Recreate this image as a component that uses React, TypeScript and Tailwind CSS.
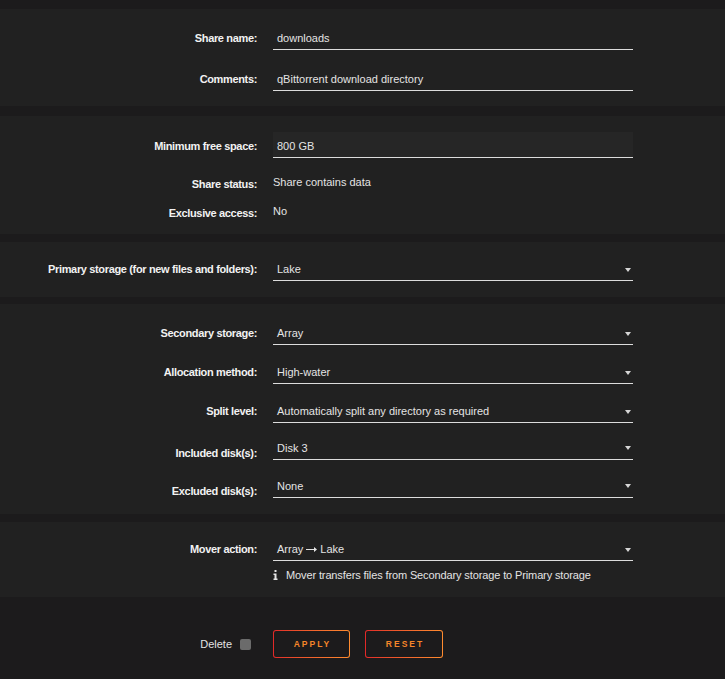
import React from "react";

const font = { fontFamily: '"Liberation Sans", Arial, sans-serif' };

const Arrow = () => (
  <svg width="6" height="6" viewBox="0 0 6 6" className="shrink-0">
    <polygon points="0,1 6,1 3,5" fill="#d6d6d6" />
  </svg>
);

const Label: React.FC<{ text: string; end?: boolean }> = ({ text, end }) => (
  <div
    className={`w-[257px] shrink-0 text-right text-[11px] font-bold leading-[14px] tracking-[-0.35px] text-[#f2f2f2] ${
      end ? "self-end" : "pt-[2px]"
    }`}
  >
    {text}
  </div>
);

const TextInput: React.FC<{ value: string; filled?: boolean }> = ({ value, filled }) => (
  <div
    className={`ml-4 flex h-[26px] w-[360px] items-center border-b border-[#dcdcdc] pl-1 pt-[4px] text-[11px] text-[#e4e4e4] ${
      filled ? "bg-[#262626]" : ""
    }`}
  >
    {value}
  </div>
);

const Select: React.FC<{ value: React.ReactNode }> = ({ value }) => (
  <div className="ml-4 flex h-[26px] w-[360px] items-center justify-between border-b border-[#dcdcdc] pl-1 pr-[2px] pt-[4px] text-[11px] text-[#e4e4e4]">
    <span>{value}</span>
    <Arrow />
  </div>
);

const MultiSelect: React.FC<{ value: string }> = ({ value }) => (
  <div className="ml-4 flex h-[26px] w-[360px] items-start justify-between border-b border-[#dcdcdc] pl-1 pr-[2px] pt-[7px] text-[11px] leading-[14px] text-[#e4e4e4]">
    <span>{value}</span>
    <span className="pt-[4px]">
      <Arrow />
    </span>
  </div>
);

const Row: React.FC<{ children: React.ReactNode; className?: string }> = ({ children, className }) => (
  <div className={`flex items-center ${className ?? ""}`}>{children}</div>
);

const Static: React.FC<{ value: string }> = ({ value }) => (
  <div className="ml-4 text-[11px] text-[#e4e4e4]">{value}</div>
);

export default function App() {
  return (
    <div className="min-h-[679px] w-full bg-[#1c1b1c] pt-[9px]" style={font}>
      {/* share name */}
      <section className="bg-[#212121] pb-[15px] pt-[15px]">
        <Row>
          <Label text="Share name:" />
          <TextInput value="downloads" />
        </Row>
        <Row className="mt-[15px]">
          <Label text="Comments:" />
          <TextInput value="qBittorrent download directory" />
        </Row>
      </section>

      {/* space / status */}
      <section className="mt-[10px] bg-[#212121] pb-[8px] pt-[16px]">
        <Row>
          <Label text="Minimum free space:" />
          <TextInput value="800 GB" filled />
        </Row>
        <Row className="mt-[10px] h-[29px]">
          <Label text="Share status:" />
          <Static value="Share contains data" />
        </Row>
        <Row className="h-[29px]">
          <Label text="Exclusive access:" />
          <Static value="No" />
        </Row>
      </section>

      {/* primary */}
      <section className="mt-[8px] bg-[#212121] pb-[16px] pt-[13px]">
        <Row>
          <Label text="Primary storage (for new files and folders):" />
          <Select value="Lake" />
        </Row>
      </section>

      {/* secondary */}
      <section className="mt-[7px] bg-[#212121] pb-[16px] pt-[15px]">
        <Row>
          <Label text="Secondary storage:" />
          <Select value="Array" />
        </Row>
        <Row className="mt-[13px]">
          <Label text="Allocation method:" />
          <Select value="High-water" />
        </Row>
        <Row className="mt-[13px]">
          <Label text="Split level:" />
          <Select value="Automatically split any directory as required" />
        </Row>
        <Row className="mt-[11px] items-stretch">
          <Label text="Included disk(s):" end />
          <MultiSelect value="Disk 3" />
        </Row>
        <Row className="mt-[12px] items-stretch">
          <Label text="Excluded disk(s):" end />
          <MultiSelect value="None" />
        </Row>
      </section>

      {/* mover */}
      <section className="mt-[8px] bg-[#212121] pb-[15px] pt-[13px]">
        <Row>
          <Label text="Mover action:" />
          <Select
            value={
              <span className="flex items-center gap-[3px]">
                Array
                <svg width="11" height="5" viewBox="0 0 11 5">
                  <path d="M0 2 H8 V0 L11 2.5 L8 5 V3 H0 Z" fill="#e4e4e4" />
                </svg>
                Lake
              </span>
            }
          />
        </Row>
        <Row className="mt-[7px]">
          <div className="w-[257px] shrink-0" />
          <div className="ml-4 flex items-center gap-[8px] text-[11px] leading-[14px] tracking-[-0.12px] text-[#e4e4e4]">
            <svg width="5" height="10" viewBox="0 0 5 10">
              <rect x="1.5" y="0" width="2" height="2" fill="#e4e4e4" />
              <path d="M0.5 3.5 H3.5 V8.5 H4.5 V10 H0.5 V8.5 H1.5 V5 H0.5 Z" fill="#e4e4e4" />
            </svg>
            <span>Mover transfers files from Secondary storage to Primary storage</span>
          </div>
        </Row>
      </section>

      {/* actions */}
      <div className="flex items-center pt-[33px]">
        <div className="flex w-[251px] shrink-0 items-center justify-end gap-[8px]">
          <span className="text-[11px] text-[#e4e4e4]">Delete</span>
          <span className="h-[11px] w-[11px] rounded-[2px] bg-[#6b6b6b]" />
        </div>
        <div className="ml-[22px] flex gap-[15px]">
          <button className="rounded-[3px] bg-gradient-to-r from-[#e22828] to-[#ff8c2f] p-[1px]">
            <span className="flex h-[26px] w-[75px] items-center justify-center rounded-[2px] bg-[#1c1b1c] pl-[2px] text-[8.5px] font-bold tracking-[2px] text-[#f5862a]">
              APPLY
            </span>
          </button>
          <button className="rounded-[3px] bg-gradient-to-r from-[#e22828] to-[#ff8c2f] p-[1px]">
            <span className="flex h-[26px] w-[76px] items-center justify-center rounded-[2px] bg-[#1c1b1c] pl-[2px] text-[8.5px] font-bold tracking-[2px] text-[#f5862a]">
              RESET
            </span>
          </button>
        </div>
      </div>
    </div>
  );
}
